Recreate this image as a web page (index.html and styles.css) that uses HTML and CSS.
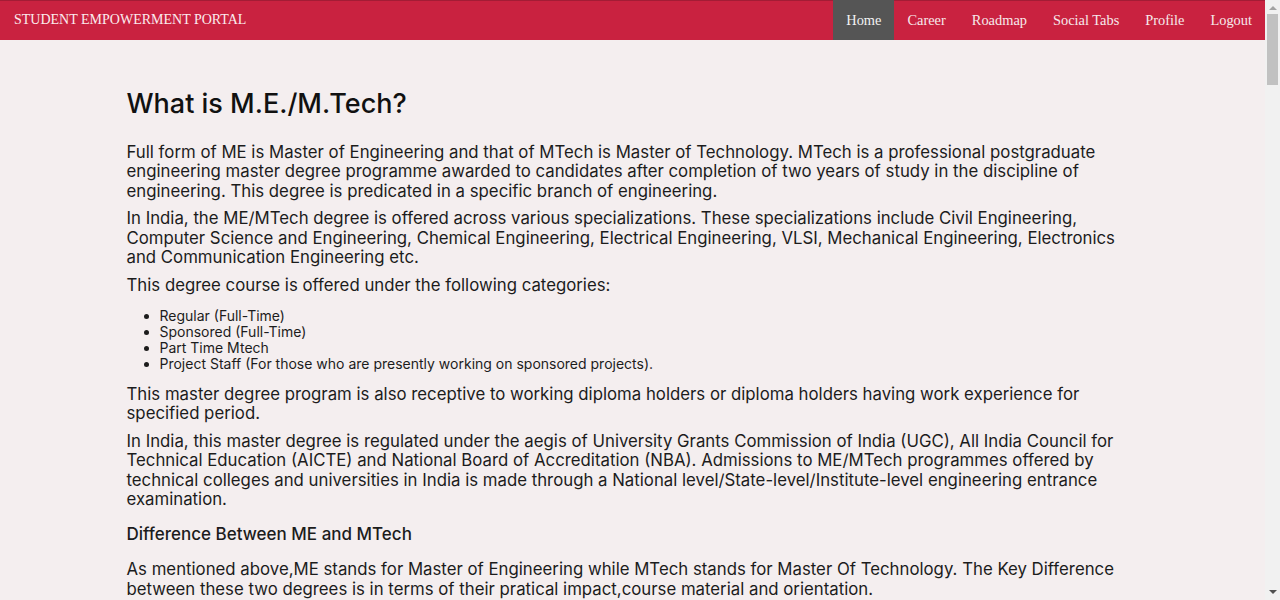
FILE: index.html
```html
<!DOCTYPE html>
<html lang="en">
<head>
<meta charset="utf-8">
<title>Student Empowerment Portal</title>
<link rel="stylesheet" href="styles.css">
</head>
<body>
<nav class="topnav">
  <a class="brand" href="#">STUDENT EMPOWERMENT PORTAL</a>
  <ul class="menu">
    <li><a class="active" href="#">Home</a></li>
    <li><a href="#">Career</a></li>
    <li><a href="#">Roadmap</a></li>
    <li><a href="#">Social Tabs</a></li>
    <li><a href="#">Profile</a></li>
    <li><a href="#">Logout</a></li>
  </ul>
</nav>
<main class="content">
  <h1 class="title">What is M.E./M.Tech?</h1>
  <p>Full form of ME is Master of Engineering and that of MTech is Master of Technology. MTech is a professional postgraduate engineering master degree programme awarded to candidates after completion of two years of study in the discipline of engineering. This degree is predicated in a specific branch of engineering.</p>
  <p>In India, the ME/MTech degree is offered across various specializations. These specializations include Civil Engineering, Computer Science and Engineering, Chemical Engineering, Electrical Engineering, VLSI, Mechanical Engineering, Electronics and Communication Engineering etc.</p>
  <p>This degree course is offered under the following categories:</p>
  <ul class="cats">
    <li>Regular (Full-Time)</li>
    <li>Sponsored (Full-Time)</li>
    <li>Part Time Mtech</li>
    <li>Project Staff (For those who are presently working on sponsored projects).</li>
  </ul>
  <p>This master degree program is also receptive to working diploma holders or diploma holders having work experience for specified period.</p>
  <p>In India, this master degree is regulated under the aegis of University Grants Commission of India (UGC), All India Council for Technical Education (AICTE) and National Board of Accreditation (NBA). Admissions to ME/MTech programmes offered by technical colleges and universities in India is made through a National level/State-level/Institute-level engineering entrance examination.</p>
  <h2 class="subtitle">Difference Between ME and MTech</h2>
  <p>As mentioned above,ME stands for Master of Engineering while MTech stands for Master Of Technology. The Key Difference between these two degrees is in terms of their pratical impact,course material and orientation.</p>
  <p>ME is a more theory oriented degree while MTech is a more application oriented degree. ME focuses on the fundamentals and theoretical concepts whereas MTech focuses on practical knowledge and industry requirements.</p>
</main>
<div class="scrollbar" aria-hidden="true">
  <span class="arrow up"></span>
  <span class="thumb"></span>
  <span class="arrow down"></span>
</div>
</body>
</html>
```
FILE: styles.css
```css
html, body {
  margin: 0;
  padding: 0;
}
body {
  background: #f4eeef;
  font-family: Inter, "Noto Sans", sans-serif;
  color: #1c1c1c;
  margin-right: 15px;
}
.topnav {
  display: flex;
  align-items: stretch;
  justify-content: space-between;
  background: #c92240;
  box-shadow: inset 0 1px 0 #a31c35;
  height: 40px;
}
.brand {
  font-family: "Liberation Serif", "Times New Roman", serif;
  font-size: 14px;
  color: #fbecee;
  text-decoration: none;
  display: flex;
  align-items: center;
  padding-left: 14px;
}
.menu {
  list-style: none;
  margin: 0;
  padding: 0;
  display: flex;
}
.menu li {
  display: flex;
}
.menu a {
  font-family: "Liberation Serif", "Times New Roman", serif;
  font-size: 14.4px;
  color: #f6e9eb;
  text-decoration: none;
  display: flex;
  align-items: center;
  padding: 0 13px;
}
.menu a.active {
  background: #555555;
  color: #f2f2f2;
}
.content {
  width: 80%;
  margin: 0 auto;
  padding-top: 48px;
  padding-bottom: 40px;
}
.title {
  font-size: 27px;
  font-weight: 500;
  margin: 0 0 23px;
  color: #111;
  line-height: 32px;
}
.content p {
  font-size: 16.8px;
  line-height: 19.3px;
  margin: 0 0 8.5px;
}
.cats {
  margin: 13px 0 13px;
  padding-left: 33px;
  font-size: 14px;
  line-height: 16px;
}
.subtitle {
  font-size: 17px;
  font-weight: 500;
  margin: 15px 0 16px;
  line-height: 20px;
}
.scrollbar {
  position: fixed;
  top: 0;
  right: 0;
  bottom: 0;
  width: 15px;
  background: #f1f1f1;
  display: flex;
  flex-direction: column;
  align-items: center;
}
.arrow {
  width: 0;
  height: 0;
  border-left: 4px solid transparent;
  border-right: 4px solid transparent;
}
.arrow.up {
  border-bottom: 4px solid #a3a3a3;
  margin-top: 6px;
}
.arrow.down {
  border-top: 4px solid #505050;
  margin-top: auto;
  margin-bottom: 6px;
}
.thumb {
  width: 11px;
  height: 71px;
  margin-top: 4px;
  background: #c1c1c1;
}
```
